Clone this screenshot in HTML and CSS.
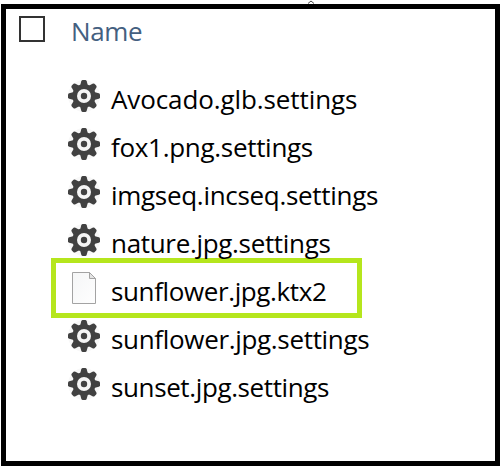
FILE: index.html
```
<!DOCTYPE html>
<html lang="en">
<head>
<meta charset="utf-8">
<title>Files</title>
<link rel="stylesheet" href="styles.css">
</head>
<body>
<svg class="sprite" aria-hidden="true">
  <defs>
    <linearGradient id="paper" x1="0" y1="0" x2="1" y2="1"><stop offset="0" stop-color="#f5f6f7"/><stop offset="1" stop-color="#fefefe"/></linearGradient>
    <symbol id="gear" viewBox="-18 -18 36 36">
      <circle r="16" fill="#f8f8f8"/>
      <g fill="#414141">
        <circle r="11.7"/>
        <path id="tooth" d="M-4-10L-2.7-14.8Q-2.3-16-1.2-16H1.2Q2.3-16 2.7-14.8L4-10V10L2.7 14.8Q2.3 16 1.2 16H-1.2Q-2.3 16-2.7 14.8L-4 10Z"/>
        <use href="#tooth" transform="rotate(45)"/>
        <use href="#tooth" transform="rotate(90)"/>
        <use href="#tooth" transform="rotate(135)"/>
      </g>
      <circle r="7" fill="#f5f5f5"/>
      <circle r="3.2" fill="#414141"/>
    </symbol>
  </defs>
</svg>
<div class="top"><svg class="caret" viewBox="0 0 8 4"><path d="M1 3.5L4 1L7 3.5"/></svg></div>
<main class="frame">
  <header class="head"><span class="check"></span><span class="title">Name</span></header>
  <ul class="files">
    <li class="row"><svg class="icon"><use href="#gear"/></svg><span class="name n1">Avocado.glb.settings</span></li>
    <li class="row"><svg class="icon"><use href="#gear"/></svg><span class="name n2">fox1.png.settings</span></li>
    <li class="row"><svg class="icon"><use href="#gear"/></svg><span class="name n3">imgseq.incseq.settings</span></li>
    <li class="row"><svg class="icon"><use href="#gear"/></svg><span class="name n4">nature.jpg.settings</span></li>
    <li class="row marked"><svg class="icon" viewBox="0 0 36 36"><path d="M6.5 2.5H23.5L29.5 8.5V33.5H6.5Z" fill="url(#paper)" stroke="#a3a3a3"/><path d="M23.5 2.5V8.5H29.5Z" fill="#e4e4e4" stroke="#a3a3a3"/></svg><span class="name n5">sunflower.jpg.ktx2</span></li>
    <li class="row"><svg class="icon"><use href="#gear"/></svg><span class="name n6">sunflower.jpg.settings</span></li>
    <li class="row"><svg class="icon"><use href="#gear"/></svg><span class="name n7">sunset.jpg.settings</span></li>
  </ul>
</main>
</body>
</html>
```
FILE: styles.css
```
* { box-sizing: border-box; }
body { margin: 0; width: 502px; height: 470px; overflow: hidden; background: #fff; color: #000; font: 26px/36px "Open Sans", "Noto Sans", sans-serif; }
.sprite { position: absolute; width: 0; height: 0; }
.top { height: 4px; padding-left: 307px; }
.caret { display: block; width: 8px; height: 4px; fill: none; stroke: #444; }
.frame { width: 499px; height: 462px; margin-left: 1px; border: 5px solid #000; }
.head { display: flex; align-items: center; height: 40px; padding-left: 13px; }
.check { width: 26px; height: 26px; border: 2px solid #333; }
.title { margin-left: 26px; padding-top: 4px; color: #44607f; letter-spacing: -.4px; }
.files { list-style: none; margin: 23px 0 0 45px; padding: 0; width: 311px; }
.row { display: flex; align-items: center; height: 48px; padding-left: 15px; }
.icon { width: 36px; height: 36px; flex: none; }
.name { margin-left: 9px; padding-top: 6px; white-space: nowrap; }
.n1 { letter-spacing: -.1px; }
.n2, .n3 { letter-spacing: -.3px; }
.n4, .n6 { letter-spacing: -.32px; }
.n5, .n7 { letter-spacing: -.38px; }
.marked { height: 60px; margin: -6px 0; padding-left: 10px; border: 5px solid #b5e61d; }
```
